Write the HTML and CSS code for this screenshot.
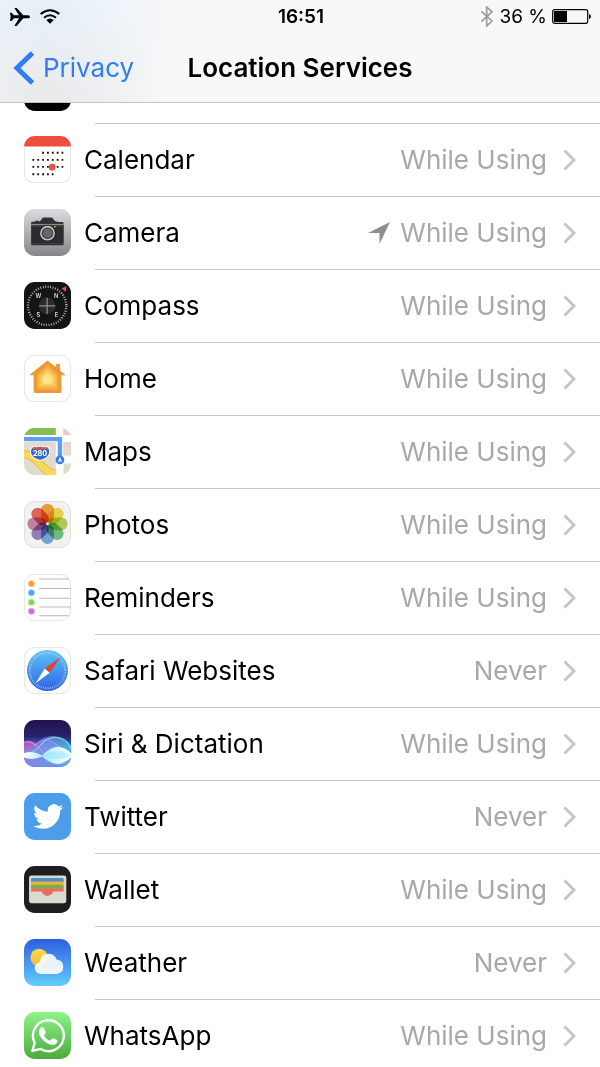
FILE: index.html
```html
<!DOCTYPE html>
<html lang="en">
<head>
<meta charset="utf-8">
<meta name="viewport" content="width=device-width, initial-scale=1">
<title>Location Services</title>
<link rel="stylesheet" href="styles.css">
</head>
<body>
<svg class="defs" aria-hidden="true">
  <defs>
    <clipPath id="tile"><rect width="140" height="140" rx="32"/></clipPath>
    <linearGradient id="silver" x2="0" y2="1"><stop stop-color="#dbdcde"/><stop offset="1" stop-color="#84868b"/></linearGradient>
    <linearGradient id="safari" x2="0" y2="1"><stop stop-color="#5cc5f5"/><stop offset="1" stop-color="#2f62e6"/></linearGradient>
    <linearGradient id="sky" x2="0" y2="1"><stop stop-color="#2d5de2"/><stop offset="1" stop-color="#62cdfb"/></linearGradient>
    <linearGradient id="sun" x2="0" y2="1"><stop stop-color="#fbdc4a"/><stop offset="1" stop-color="#f7b733"/></linearGradient>
    <linearGradient id="leaf" x2="0" y2="1"><stop stop-color="#8ef58a"/><stop offset="1" stop-color="#4bab3b"/></linearGradient>
    <linearGradient id="night" x2="0" y2="1"><stop stop-color="#20124c"/><stop offset=".35" stop-color="#2a2272"/><stop offset=".65" stop-color="#4c8fd6"/><stop offset="1" stop-color="#4673c8"/></linearGradient>
    <linearGradient id="aurora"><stop stop-color="#ee58bd"/><stop offset=".4" stop-color="#a77df0"/><stop offset="1" stop-color="#3ddbe2"/></linearGradient>
    <linearGradient id="glow"><stop stop-color="#ffffff"/><stop offset=".4" stop-color="#a8ecff"/><stop offset="1" stop-color="#ffffff"/></linearGradient>
    <symbol id="chevron" viewBox="0 0 13 22"><path d="M1.500 1.500 11 11 1.500 20.500" fill="none" stroke="#c3c3c8" stroke-width="2.800"/></symbol>
  </defs>
</svg>

<header class="top">
  <div class="status">
    <div class="status-side">
      <svg width="20" height="18" viewBox="0 0 60 54" role="img" aria-label="Airplane mode"><path d="M0 14h5l7 8h15L13 0h7l20 22h14q6 0 6 4.500t-6 4.500H40L20 54h-7l14-23H12l-7 8H0l2-12.500z"/></svg>
      <svg width="20" height="15" viewBox="0 0 60 45" role="img" aria-label="Wi-Fi"><g fill="none" stroke="#000" stroke-width="6"><path d="M2 15q28-23 56 0"/><path d="M12 26q18-15 36 0"/></g><path d="M19 33q11-9 22 0L30 44z"/></svg>
    </div>
    <time class="clock">16:51</time>
    <div class="status-side status-end">
      <svg width="14" height="21" viewBox="0 0 42 63" role="img" aria-label="Bluetooth"><path d="M4 16 36 45 20 60V3l16 14L4 47" fill="none" stroke="#9c9c9c" stroke-width="5"/></svg>
      <span class="charge">36 %</span>
      <svg width="40" height="15" viewBox="0 0 40 15" role="img" aria-label="Battery"><rect x=".7" y=".7" width="35" height="13.600" rx="2" fill="none" stroke="#000" stroke-width="1.200"/><path d="M2 2h13v11H2z"/><path d="M37 5q2 .5 2 2.500T37 10z"/></svg>
    </div>
  </div>
  <nav class="bar">
    <a class="back" href="#privacy"><svg width="21" height="34" viewBox="0 0 21 34" aria-hidden="true"><path d="M19.500 2 4 17l15.500 15" fill="none" stroke="#2f7cf6" stroke-width="5"/></svg>Privacy</a>
    <h1 class="title">Location Services</h1>
  </nav>
</header>

<main class="list">
  <div class="clipped"><svg class="icon" viewBox="0 0 140 140" aria-hidden="true"><rect width="140" height="140" rx="32"/></svg></div>

  <a class="row" href="#calendar">
    <svg class="icon" viewBox="0 0 140 140" aria-hidden="true"><g clip-path="url(#tile)"><path fill="#fff" d="M0 0h140v140H0z"/><path fill="#ec4f3d" d="M0 0h140v31H0z"/></g><path d="M1 31v77q0 31 31 31h76q31 0 31-31V31" fill="none" stroke="#dedede" stroke-width="2.500"/><g stroke="#111" stroke-width="5.500" stroke-dasharray="5.500 9"><path d="M54 50h63M25 71h92M25 92h92M25 114h63"/></g><circle cx="84" cy="93" r="10" fill="#ec4f3d"/></svg>
    <span class="name">Calendar</span><span class="value">While Using</span><svg class="chevron" aria-hidden="true"><use href="#chevron"/></svg>
  </a>
  <a class="row" href="#camera">
    <svg class="icon" viewBox="0 0 140 140" aria-hidden="true"><rect width="140" height="140" rx="32" fill="url(#silver)"/><path fill="#303133" d="M21 42q0-4 4-4h8v-3h11v3l6-4 5-7q2-2 5-2h20q3 0 5 2l6 8q4 3 11 4h12q4 0 4 4v62q0 3-3 3H24q-3 0-3-3z"/><path fill="#434446" d="M21 48h97v55H21z"/><path fill="#2b2c2e" d="M23 52h93v49H23z"/><path stroke="#a3a4a7" stroke-width="2.500" d="M21 46h97"/><circle cx="70" cy="72" r="25" fill="#242527"/><circle cx="70" cy="72" r="20" fill="#4b4c4f" stroke="#d2d3d5" stroke-width="4"/><circle cx="70" cy="72" r="13" fill="#66676a"/><circle cx="92" cy="53" r="2.500" fill="#f5a623"/></svg>
    <span class="name">Camera</span><svg class="arrow" viewBox="0 0 22 22" role="img" aria-label="Used location recently"><path fill="#8e8e93" d="M22 0 11.500 22V11H0z"/></svg><span class="value">While Using</span><svg class="chevron" aria-hidden="true"><use href="#chevron"/></svg>
  </a>
  <a class="row" href="#compass">
    <svg class="icon" viewBox="0 0 140 140" aria-hidden="true"><rect width="140" height="140" rx="32" fill="#141414"/><circle cx="69" cy="71" r="57" fill="none" stroke="#c8c8c8" stroke-width="7" stroke-dasharray="2.500 4.963"/><circle cx="69" cy="71" r="25" fill="#2b2b2b"/><path stroke="#929292" stroke-width="3.500" d="M69 47v48M45 71h48"/><g fill="#ddd" class="points"><text x="43" y="49">W</text><text x="96" y="49">N</text><text x="43" y="104">S</text><text x="97" y="104">E</text></g><path fill="#f0503c" d="m126 13-1 16-13-10z"/></svg>
    <span class="name">Compass</span><span class="value">While Using</span><svg class="chevron" aria-hidden="true"><use href="#chevron"/></svg>
  </a>
  <a class="row" href="#home">
    <svg class="icon" viewBox="0 0 140 140" aria-hidden="true"><rect x="1" y="1" width="138" height="138" rx="31" fill="#fff" stroke="#dedede" stroke-width="2.500"/><path fill="#ef9737" stroke="#ef9737" stroke-width="3" stroke-linejoin="round" d="M70 18 96 39V28h10v19l15 12h-11v48q0 5-5 5H35q-5 0-5-5V59H19z"/><path fill="#f3ac42" d="m70 30 32 27v47H38V57z"/><path fill="#f7bf54" d="m70 38 26 22v37H44V60z"/><path fill="#f9d166" d="m70 46 20 17v27H50V63z"/><path fill="#fbe586" d="m70 53 14 13v19H56V66z"/></svg>
    <span class="name">Home</span><span class="value">While Using</span><svg class="chevron" aria-hidden="true"><use href="#chevron"/></svg>
  </a>
  <a class="row" href="#maps">
    <svg class="icon" viewBox="0 0 140 140" aria-hidden="true"><g clip-path="url(#tile)"><path fill="#e0dbcd" d="M0 0h140v140H0z"/><path fill="#84c050" d="M0 0h95v21H0z"/><path fill="#f4c3cf" d="M117 0h23v21h-23z"/><path fill="#fff" d="M0 21h140v21H0zM95 0h22v140H95zM117 82h23v24h-23z"/><path fill="none" stroke="#e4ba3c" stroke-width="25" d="M-5 78q28 1 44 20t32 30 34 10"/><path fill="none" stroke="#fbd75a" stroke-width="20" d="M-5 78q28 1 44 20t32 30 34 10"/><path fill="#fff" d="M95 106h22v34H95z"/><path fill="none" stroke="#5c9df5" stroke-width="13" d="M0 33h107v60"/><path fill="#2d6bd0" stroke="#fff" stroke-width="3" d="M27 55q10 3 21-1 11 4 21 1 8 5 8 15 0 19-29 27-29-8-29-27 0-10 8-15z"/><path fill="#e15241" d="M28 57q10 3 20-1 10 4 20 1l5 6H23z"/><text class="shield" x="48" y="83">280</text><circle cx="107" cy="95" r="13" fill="#3479ee"/><path fill="#fff" d="m107 85 6 18-6-5-6 5z"/></g></svg>
    <span class="name">Maps</span><span class="value">While Using</span><svg class="chevron" aria-hidden="true"><use href="#chevron"/></svg>
  </a>
  <a class="row" href="#photos">
    <svg class="icon" viewBox="0 0 140 140" aria-hidden="true"><rect x="1" y="1" width="138" height="138" rx="31" fill="#f1f1f1" stroke="#d9d9d9" stroke-width="2.500"/><g class="petals"><rect x="51" y="8" width="38" height="58" rx="19" fill="#f5a33c"/><rect x="51" y="8" width="38" height="58" rx="19" fill="#ede04d" transform="rotate(45 70 68)"/><rect x="51" y="8" width="38" height="58" rx="19" fill="#b5d65a" transform="rotate(90 70 68)"/><rect x="51" y="8" width="38" height="58" rx="19" fill="#78c489" transform="rotate(135 70 68)"/><rect x="51" y="8" width="38" height="58" rx="19" fill="#7ba9dc" transform="rotate(180 70 68)"/><rect x="51" y="8" width="38" height="58" rx="19" fill="#9b86c4" transform="rotate(225 70 68)"/><rect x="51" y="8" width="38" height="58" rx="19" fill="#cb87b0" transform="rotate(270 70 68)"/><rect x="51" y="8" width="38" height="58" rx="19" fill="#ea6959" transform="rotate(315 70 68)"/></g><circle cx="70" cy="68" r="4" fill="#fff"/></svg>
    <span class="name">Photos</span><span class="value">While Using</span><svg class="chevron" aria-hidden="true"><use href="#chevron"/></svg>
  </a>
  <a class="row" href="#reminders">
    <svg class="icon" viewBox="0 0 140 140" aria-hidden="true"><rect x="1" y="1" width="138" height="138" rx="31" fill="#fff" stroke="#dedede" stroke-width="2.500"/><path stroke="#b9b9b9" stroke-width="3" d="M45 15h89M45 43h94M45 72h94M45 98h94M45 124h89"/><g stroke-width="3"><circle cx="22" cy="29" r="9" fill="#f29b38" stroke="#f8c78d"/><circle cx="22" cy="56" r="9" fill="#4da4ee" stroke="#98caf6"/><circle cx="22" cy="84" r="9" fill="#7fd858" stroke="#b3e89b"/><circle cx="22" cy="111" r="9" fill="#b877da" stroke="#d6aeea"/></g></svg>
    <span class="name">Reminders</span><span class="value">While Using</span><svg class="chevron" aria-hidden="true"><use href="#chevron"/></svg>
  </a>
  <a class="row" href="#safari">
    <svg class="icon" viewBox="0 0 140 140" aria-hidden="true"><rect x="1" y="1" width="138" height="138" rx="31" fill="#fff" stroke="#dedede" stroke-width="2.500"/><circle cx="70" cy="70" r="61" fill="url(#safari)"/><circle cx="70" cy="70" r="53" fill="none" stroke="#d5eafc" stroke-width="6" stroke-dasharray="1.500 4.050"/><path fill="#e93d30" d="M109 30 62 64l14 13z"/><path fill="#fff" d="m34 109 28-45 14 13z"/></svg>
    <span class="name">Safari Websites</span><span class="value">Never</span><svg class="chevron" aria-hidden="true"><use href="#chevron"/></svg>
  </a>
  <a class="row" href="#siri">
    <svg class="icon" viewBox="0 0 140 140" aria-hidden="true"><g clip-path="url(#tile)"><path fill="url(#night)" d="M0 0h140v140H0z"/><path fill="url(#aurora)" opacity=".65" d="M0 66q20-10 36 4 26-24 54-22 30 2 50 32v58H0z"/><path fill="#6d9cf0" opacity=".6" d="M0 92q30 0 54-22t86 44v26H0z"/><path fill="none" stroke="#f184d8" stroke-width="3" d="M0 66q22-6 42 16t42 34"/><path fill="none" stroke="#69e6ec" stroke-width="3" d="M0 104q30-4 48-28t48-24 44 32"/><path fill="none" stroke="#a9c6ff" stroke-width="2" d="M30 78q26-28 52-14t58 52"/><path fill="url(#glow)" d="M0 99q24-10 54 7 26-27 50-26 20 2 36 20v12q-18 18-38 19-22 1-48-22Q24 122 0 112z"/><path fill="#8fe4fb" opacity=".5" d="M54 106q32-16 60-12l26 10q-40 24-86 2z"/></g></svg>
    <span class="name">Siri &amp; Dictation</span><span class="value">While Using</span><svg class="chevron" aria-hidden="true"><use href="#chevron"/></svg>
  </a>
  <a class="row" href="#twitter">
    <svg class="icon" viewBox="0 0 140 140" aria-hidden="true"><rect width="140" height="140" rx="32" fill="#4c9eeb"/><path fill="#fff" transform="translate(27 25) scale(3.750)" d="M23.953 4.570a10 10 0 01-2.825.775 4.958 4.958 0 002.163-2.723c-.951.555-2.005.959-3.127 1.184a4.920 4.920 0 00-8.384 4.482C7.690 8.095 4.067 6.130 1.640 3.162a4.822 4.822 0 00-.666 2.475c0 1.710.870 3.213 2.188 4.096a4.904 4.904 0 01-2.228-.616v.06a4.923 4.923 0 003.946 4.827 4.996 4.996 0 01-2.212.085 4.936 4.936 0 004.604 3.417 9.867 9.867 0 01-6.102 2.105c-.39 0-.779-.023-1.170-.067a13.995 13.995 0 007.557 2.209c9.053 0 13.998-7.496 13.998-13.985 0-.21 0-.42-.015-.63A9.935 9.935 0 0024 4.590z"/></svg>
    <span class="name">Twitter</span><span class="value">Never</span><svg class="chevron" aria-hidden="true"><use href="#chevron"/></svg>
  </a>
  <a class="row" href="#wallet">
    <svg class="icon" viewBox="0 0 140 140" aria-hidden="true"><rect width="140" height="140" rx="32" fill="#1e1e1e"/><rect x="15" y="28" width="111" height="83" rx="7" fill="#dcd9d0"/><path fill="#4a8fc4" d="M21 49V40q0-4 4-4h89q4 0 4 4v9z"/><path fill="#efb03f" d="M21 59V49q0-3 4-3h89q4 0 4 3v10z"/><path fill="#75b04b" d="M21 68v-9q0-3 4-3h89q4 0 4 3v9z"/><path fill="#e2705f" d="M21 76v-7q0-3 4-3h89q4 0 4 3v7H88q-7 13-18 13T52 76z"/></svg>
    <span class="name">Wallet</span><span class="value">While Using</span><svg class="chevron" aria-hidden="true"><use href="#chevron"/></svg>
  </a>
  <a class="row" href="#weather">
    <svg class="icon" viewBox="0 0 140 140" aria-hidden="true"><rect width="140" height="140" rx="32" fill="url(#sky)"/><circle cx="45" cy="55" r="26" fill="url(#sun)"/><path fill="#fff" opacity=".88" d="M50 104q-18-2-18-18 0-14 14-17 4-25 26-25 19 0 25 17 20 3 20 22 0 19-19 21z"/></svg>
    <span class="name">Weather</span><span class="value">Never</span><svg class="chevron" aria-hidden="true"><use href="#chevron"/></svg>
  </a>
  <a class="row" href="#whatsapp">
    <svg class="icon" viewBox="0 0 140 140" aria-hidden="true"><rect width="140" height="140" rx="32" fill="url(#leaf)"/><path fill="none" stroke="#fff" stroke-width="7" stroke-linejoin="round" d="m25 116 7-24a46 46 0 1 1 17 18z"/><path fill="#fff" d="M50 47q5-3 9 0l6 13q0 3-6 9 7 13 19 17l7-8q3-1 15 6 1 7-5 11-8 5-19 1-19-7-29-26-6-14 3-23z"/></svg>
    <span class="name">WhatsApp</span><span class="value">While Using</span><svg class="chevron" aria-hidden="true"><use href="#chevron"/></svg>
  </a>
</main>
</body>
</html>
```
FILE: styles.css
```css
* {
  box-sizing: border-box;
}

body {
  display: flex;
  flex-direction: column;
  height: 100vh;
  margin: 0;
  background: #fff;
  color: #000;
  font-family: Inter, "Liberation Sans", sans-serif;
  font-size: 26px;
  line-height: 32px;
}

svg {
  display: block;
  flex: none;
}

a {
  color: inherit;
  text-decoration: none;
}

.defs {
  position: absolute;
  width: 0;
  height: 0;
}

.top {
  flex: none;
  border-bottom: 1px solid #c4c4c4;
  background:
    radial-gradient(circle at 48px 110px, #e9e9ea, transparent 120px),
    radial-gradient(circle at 40px 10px, #e4f0fa, transparent 150px),
    #f8f8f8;
}

.status {
  display: grid;
  grid-template-columns: 1fr auto 1fr;
  align-items: center;
  height: 33px;
  padding: 0 8px 0 10px;
  font-size: 19px;
}

.status-side {
  display: flex;
  align-items: center;
  gap: 10px;
}

.status-end {
  justify-content: flex-end;
  gap: 5px;
}

.clock {
  font-weight: 600;
}

.bar {
  display: grid;
  grid-template-columns: 1fr auto 1fr;
  align-items: center;
  height: 69px;
  padding: 0 13px;
}

.back {
  display: flex;
  align-items: center;
  gap: 9px;
  color: #2f7cf6;
}

.title {
  margin: 0;
  font-size: 26px;
  font-weight: 600;
}

.list {
  flex: 1;
  min-height: 0;
  overflow: hidden;
}

.clipped {
  display: flex;
  align-items: flex-end;
  height: 20px;
  padding: 0 24px 12px;
  overflow: hidden;
}

.icon {
  width: 47px;
  height: 47px;
}

.row {
  display: flex;
  align-items: center;
  height: 73px;
  padding: 0 24px;
  background: linear-gradient(#c8c7cc, #c8c7cc) 95px 0 / 100% 1px no-repeat;
}

.name {
  flex: 1;
  padding-left: 13px;
}

.value {
  color: #a8a8a8;
}

.arrow {
  width: 22px;
  height: 22px;
  margin-right: 10px;
}

.chevron {
  width: 13px;
  height: 22px;
  margin-left: 16px;
}

.points {
  font-size: 17px;
  font-weight: 600;
  text-anchor: middle;
}

.shield {
  fill: #fff;
  font-size: 22px;
  font-weight: 700;
  text-anchor: middle;
}

.petals rect {
  mix-blend-mode: multiply;
}
```
